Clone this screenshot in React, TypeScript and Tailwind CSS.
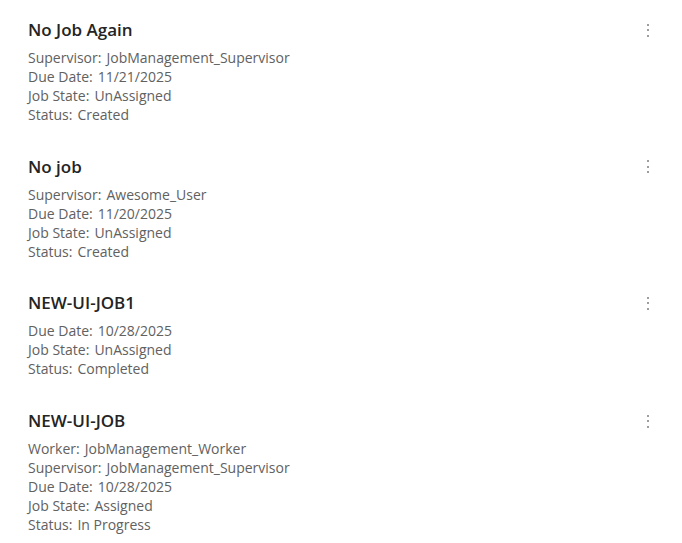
import React from "react";

type Job = { title: string; fields: [string, string][] };

const jobs: Job[] = [
  {
    title: "No Job Again",
    fields: [
      ["Supervisor", "JobManagement_Supervisor"],
      ["Due Date", "11/21/2025"],
      ["Job State", "UnAssigned"],
      ["Status", "Created"],
    ],
  },
  {
    title: "No job",
    fields: [
      ["Supervisor", "Awesome_User"],
      ["Due Date", "11/20/2025"],
      ["Job State", "UnAssigned"],
      ["Status", "Created"],
    ],
  },
  {
    title: "NEW-UI-JOB1",
    fields: [
      ["Due Date", "10/28/2025"],
      ["Job State", "UnAssigned"],
      ["Status", "Completed"],
    ],
  },
  {
    title: "NEW-UI-JOB",
    fields: [
      ["Worker", "JobManagement_Worker"],
      ["Supervisor", "JobManagement_Supervisor"],
      ["Due Date", "10/28/2025"],
      ["Job State", "Assigned"],
      ["Status", "In Progress"],
    ],
  },
];

function Kebab() {
  return (
    <button className="flex h-6 w-6 flex-col items-center justify-center gap-[3.5px]">
      <span className="block h-[2px] w-[2px] bg-[#9e9e9e]" />
      <span className="block h-[2px] w-[2px] bg-[#9e9e9e]" />
      <span className="block h-[2px] w-[2px] bg-[#9e9e9e]" />
    </button>
  );
}

export default function App() {
  return (
    <div
      className="min-h-[543px] w-full bg-white pl-7 pr-[22px] pt-[18px]"
      style={{ fontFamily: '"Open Sans", "Noto Sans", sans-serif' }}
    >
      <div className="flex flex-col gap-[30.7px]">
        {jobs.map((j) => (
          <div key={j.title} className="flex items-start justify-between">
            <div className="flex flex-col">
              <div className="text-[17px] font-semibold leading-[24px] text-[#242424]">{j.title}</div>
              <div className="mt-[6px] flex flex-col text-[14px] leading-[19px] text-[#616161]">
                {j.fields.map(([k, v]) => (
                  <div key={k} className="flex gap-[5px]">
                    <span>{k}:</span>
                    <span>{v}</span>
                  </div>
                ))}
              </div>
            </div>
            <Kebab />
          </div>
        ))}
      </div>
    </div>
  );
}
